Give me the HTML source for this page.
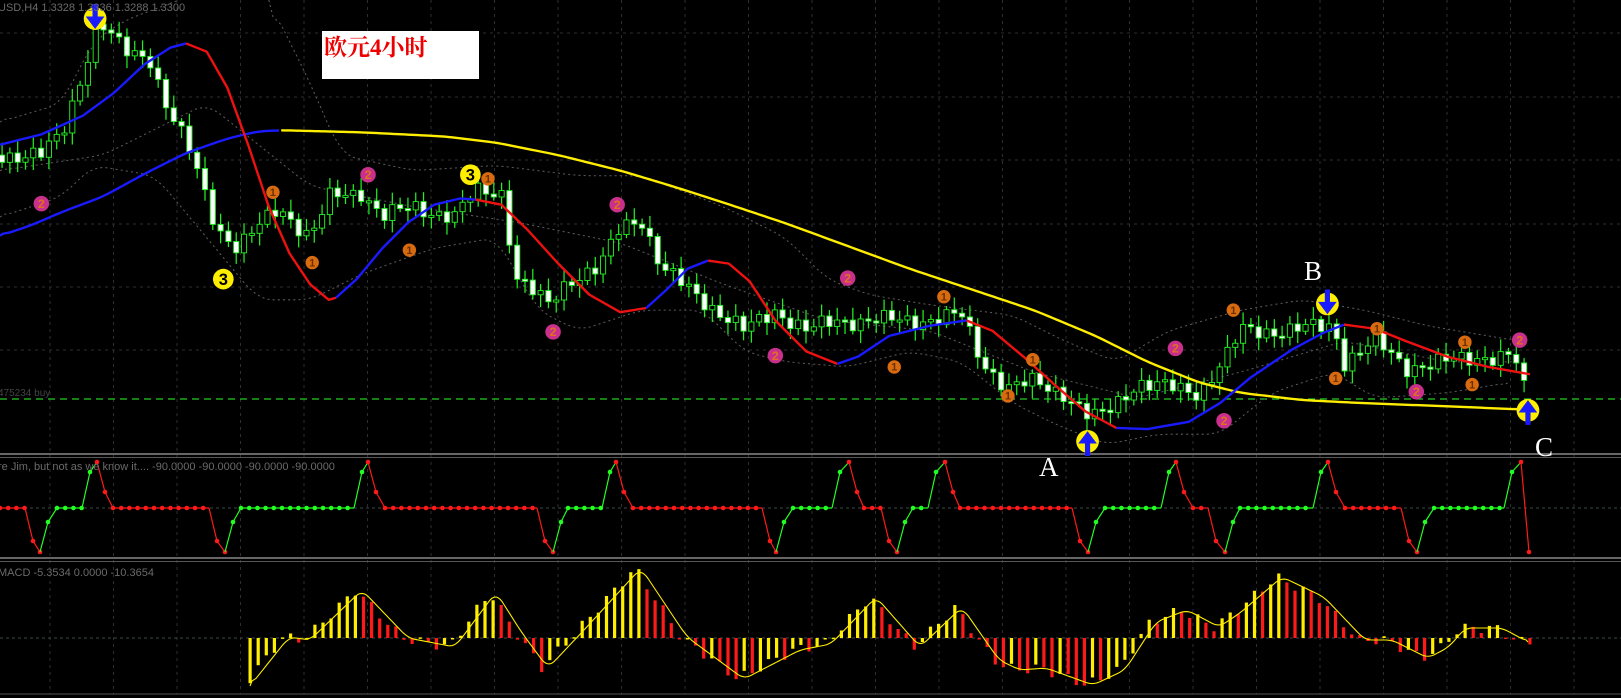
<!DOCTYPE html>
<html><head><meta charset="utf-8">
<style>
html,body{margin:0;padding:0;background:#000;}
body{width:1621px;height:698px;overflow:hidden;position:relative;font-family:"Liberation Sans",sans-serif;}
svg{position:absolute;left:0;top:0;}
.lbl{font-family:"Liberation Sans",sans-serif;font-size:11px;fill:#6a6a6a;}
.big{font-family:"Liberation Serif",serif;font-size:27px;fill:#fff;}
</style></head>
<body>
<svg id="s" width="1621" height="698" viewBox="0 0 1621 698" xmlns="http://www.w3.org/2000/svg">
<rect width="1621" height="698" fill="#000"/>
<g id="grid"></g>
<line x1="0" y1="454" x2="1621" y2="454" stroke="#888" stroke-width="1.5"/>
<line x1="0" y1="457.5" x2="1621" y2="457.5" stroke="#555" stroke-width="1"/>
<line x1="0" y1="558" x2="1621" y2="558" stroke="#888" stroke-width="1.5"/>
<line x1="0" y1="561.5" x2="1621" y2="561.5" stroke="#555" stroke-width="1"/>
<line x1="0" y1="694" x2="1621" y2="694" stroke="#555" stroke-width="1"/>
<line x1="0" y1="399" x2="1621" y2="399" stroke="#22cc22" stroke-width="1.2" stroke-dasharray="7,5"/>
<line x1="0" y1="508" x2="1621" y2="508" stroke="#3a4a4a" stroke-width="1" stroke-dasharray="3,3"/>
<line x1="0" y1="638" x2="1621" y2="638" stroke="#3a4a4a" stroke-width="1" stroke-dasharray="3,3"/>
<g id="main" transform="scale(1.0338)"></g>
<g id="osc"></g>
<g id="macd"></g>
<text class="lbl" x="-2" y="11">USD,H4  1.3328  1.3336  1.3288  1.3300</text>
<text class="lbl" x="-2" y="396" style="font-size:10px;fill:#444">475234 buy</text>
<text class="lbl" x="-2" y="470">re Jim, but not as we know it....  -90.0000 -90.0000 -90.0000 -90.0000</text>
<text class="lbl" x="-2" y="576">MACD -5.3534 0.0000 -10.3654</text>
<rect x="322" y="31" width="157" height="48" fill="#fff"/>
<text x="324" y="55" style="font-family:'Liberation Serif','Noto Serif CJK SC',serif;font-size:23px;font-weight:bold;fill:#ee0000">欧元4小时</text>
<text class="big" x="1039" y="476">A</text>
<text class="big" x="1304" y="280">B</text>
<text class="big" x="1535" y="456">C</text>
</svg>
<script>
(function(){
var NS="http://www.w3.org/2000/svg";
function el(p,t,a){var e=document.createElementNS(NS,t);for(var k in a)e.setAttribute(k,a[k]);p.appendChild(e);return e;}
function pl(p,pts,c,w,d){var a={points:pts.map(function(q){return q[0]+","+q[1]}).join(" "),fill:"none",stroke:c,"stroke-width":w,"stroke-linejoin":"round"};if(d)a["stroke-dasharray"]=d;return el(p,"polyline",a);}
function interp(pts,x){if(x<=pts[0][0])return pts[0][1];for(var i=1;i<pts.length;i++){if(x<=pts[i][0]){var a=pts[i-1],b=pts[i];return a[1]+(b[1]-a[1])*(x-a[0])/(b[0]-a[0]);}}return pts[pts.length-1][1];}
function smooth(pts,step){var o=[];for(var x=pts[0][0];x<=pts[pts.length-1][0];x+=step){o.push([x,interp(pts,x)]);}
 var r=[];for(var i=0;i<o.length;i++){var s=0,n=0;for(var j=-3;j<=3;j++){if(o[i+j]){s+=o[i+j][1];n++;}}r.push([o[i][0],s/n]);}r[0]=o[0];r[r.length-1]=o[o.length-1];return r;}
var G=document.getElementById("grid");
for(var x=50;x<1621;x+=63.5)el(G,"line",{x1:x,y1:0,x2:x,y2:694,stroke:"#2e2e2e",'stroke-dasharray':"3,4"});
[33,97,160,224,287,350].forEach(function(y){el(G,"line",{x1:0,y1:y,x2:1621,y2:y,stroke:"#2e2e2e",'stroke-dasharray':"3,4"});});
var M=document.getElementById("main");
var up=[[0,118],[60,100],[90,40],[120,20],[200,-10]],up2=[[260,0],[300,80],[330,150],[400,165],[480,160],[560,170],[620,170],[700,200],[760,230],[800,270],[840,285],[900,295],[940,300],[980,305],[1030,330],[1080,350],[1130,320],[1200,300],[1260,290],[1320,300],[1380,315],[1440,325],[1470,330]];
var lo=[[0,210],[60,190],[90,160],[150,170],[200,230],[250,290],[300,290],[350,265],[420,240],[480,230],[520,300],[560,320],[620,300],[680,300],[720,340],[760,350],[820,355],[880,340],[930,350],[980,390],[1020,410],[1070,430],[1120,420],[1180,420],[1230,380],[1290,360],[1330,385],[1400,380],[1460,370]];
var mid=[[0,165],[100,150],[200,100],[300,180],[400,200],[500,215],[600,235],[700,275],[800,310],[900,320],[1000,360],[1100,385],[1200,360],[1300,330],[1400,350],[1470,350]];
[up,up2,lo,mid].forEach(function(p){pl(M,smooth(p,4),"#5a5a5a",1,"2,3");});
var cp=[[0,150],[40,150],[60,130],[80,70],[95,20],[120,50],[145,55],[160,100],[185,150],[210,220],[230,240],[250,220],[270,200],[300,230],[320,190],[350,185],[370,210],[400,200],[440,210],[460,185],[485,185],[500,270],[530,295],[550,270],[580,260],[600,220],[620,210],[640,260],[680,290],[720,320],[750,300],[780,320],[810,310],[850,310],[890,310],[930,305],[950,350],[975,375],[1000,370],[1030,380],[1055,405],[1070,400],[1100,370],[1130,375],[1160,380],[1190,340],[1200,320],[1240,320],[1290,315],[1300,350],[1330,330],[1360,355],[1400,350],[1430,345],[1465,345],[1475,380]];
var prev=150,ii=0;
for(var cx=2;cx<=1476;cx+=7.55){ii++;var nz=Math.sin(ii*2.3)*6+Math.sin(ii*0.7)*4;var cl=interp(cp,cx)+nz;var op=prev;prev=cl;
 var bt=Math.min(op,cl),bb=Math.max(op,cl);if(bb-bt<2)bb=bt+2;
 var wt=bt-3-Math.abs(Math.sin(ii*1.7))*9,wb=bb+3+Math.abs(Math.cos(ii*1.3))*9;
 el(M,"line",{x1:cx,y1:wt,x2:cx,y2:wb,stroke:"#22ee22","stroke-width":1.2});
 el(M,"rect",{x:cx-2.5,y:bt,width:5,height:bb-bt,fill:(cl>op?"#fff":"#000"),stroke:"#22ee22","stroke-width":0.9});}
pl(M,smooth([[0,228],[30,218],[60,205],[100,190],[140,168],[180,148],[220,134],[250,127],[272,126]],3),"#1a1aff",2.3);
pl(M,smooth([[272,126],[350,128],[430,132],[480,138],[540,150],[600,165],[650,180],[700,196],[760,216],[820,238],[880,260],[940,280],[1000,300],[1060,325],[1110,350],[1160,370],[1200,380],[1260,387],[1320,390],[1400,393],[1470,396]],3),"#ffee00",2.3);
var segs=[["#1a1aff",[[0,140],[40,130],[80,112],[110,90],[140,62],[165,46],[180,42]]],
["#ee1111",[[180,42],[200,50],[220,85],[240,140],[260,200],[280,245],[300,275],[318,290],[325,288]]],
["#1a1aff",[[325,288],[345,270],[370,240],[395,215],[420,198],[445,192],[460,193]]],
["#ee1111",[[460,193],[485,198],[510,222],[540,255],[570,285],[600,302],[625,298]]],
["#1a1aff",[[625,298],[645,280],[665,260],[685,252]]],
["#ee1111",[[685,252],[705,255],[725,272],[750,310],[780,340],[810,352]]],
["#1a1aff",[[810,352],[830,345],[860,325],[900,315],[935,310]]],
["#ee1111",[[935,310],[960,320],[990,345],[1020,372],[1050,398],[1080,414]]],
["#1a1aff",[[1080,414],[1110,415],[1150,408],[1180,390],[1210,365],[1250,338],[1280,322],[1300,314]]],
["#ee1111",[[1300,314],[1330,318],[1360,330],[1400,345],[1440,355],[1480,362]]]];
segs.forEach(function(s){pl(M,s[1],s[0],2.3);});
function mk(x,y,r,f,t,tc){el(M,"circle",{cx:x,cy:y,r:r,fill:f});var e=el(M,"text",{x:x,y:y+r*0.55,"text-anchor":"middle","font-size":r*1.6,"font-weight":"bold","font-family":"Liberation Sans,sans-serif",fill:tc});e.textContent=t;}
[[40,197],[356,169],[597,198],[535,321],[750,344],[820,269],[1137,337],[1184,407],[1370,379],[1470,329]].forEach(function(p){mk(p[0],p[1],7.5,"#c8308c","2","#e07020");});
[[264,186],[472,173],[302,254],[396,242],[913,287],[999,348],[865,355],[975,383],[1193,300],[1332,318],[1417,331],[1292,366],[1424,372]].forEach(function(p){mk(p[0],p[1],6.5,"#d86a10","1","#6a3000");});
mk(216,270,10,"#ffee00","3","#000");mk(455,169,10,"#ffee00","3","#000");
function arr(x,y,dn){el(M,"circle",{cx:x,cy:y,r:11,fill:"#ffee00"});
 if(dn){el(M,"polygon",{points:(x-9)+","+(y-2)+" "+(x+9)+","+(y-2)+" "+x+","+(y+10),fill:"#1a1aff"});el(M,"rect",{x:x-2.5,y:y-14,width:5,height:13,fill:"#1a1aff"});}
 else{el(M,"polygon",{points:(x-9)+","+(y+2)+" "+(x+9)+","+(y+2)+" "+x+","+(y-10),fill:"#1a1aff"});el(M,"rect",{x:x-2.5,y:y+1,width:5,height:13,fill:"#1a1aff"});}}
arr(92,18,true);arr(1284,294,true);arr(1052,427,false);arr(1478,397,false);
var O=document.getElementById("osc");
var F=508,L=552,T=462;
var ev=[["r",0,25],["low",40],["g",57,82],["top",97],["r",113,209],["low",225],["g",241,354],["top",368],["r",385,537],["low",553],["g",568,602],["top",616],["r",633,762],["low",776],["g",793,832],["top",849],["r",864,881],["low",897],["g",913,928],["top",945],["r",960,1072],["low",1088],["g",1105,1161],["top",1176],["r",1193,1208],["low",1225],["g",1240,1313],["top",1328],["r",1345,1401],["low",1417],["g",1434,1504],["top",1521]];
function dot(x,y,c){el(O,"circle",{cx:x,cy:y,r:2.3,fill:c});}
for(var k=0;k<ev.length;k++){var e=ev[k],nx=ev[k+1];
 if(e[0]=="r"||e[0]=="g"){var c=e[0]=="r"?"#ff1a1a":"#22ff22";el(O,"line",{x1:e[1],y1:F,x2:e[2],y2:F,stroke:c,"stroke-width":1.2});for(var x=e[1];x<=e[2]+0.5;x+=8.2)dot(x,F,c);
  if(nx){if(nx[0]=="low"){pl(O,[[e[2],F],[e[2]+8,541],[nx[1],L]],"#ff1a1a",1.2);dot(e[2]+8,541,"#ff1a1a");dot(nx[1],L,"#ff1a1a");}
   else{pl(O,[[e[2],F],[e[2]+8,472],[nx[1],T]],"#22ff22",1.2);dot(e[2]+8,472,"#22ff22");dot(nx[1],T,"#ff1a1a");}}}
 if(e[0]=="low"&&nx){pl(O,[[e[1],L],[e[1]+8,522],[nx[1],F]],"#22ff22",1.2);dot(e[1]+8,522,"#22ff22");}
 if(e[0]=="top"&&nx){pl(O,[[e[1],T],[e[1]+8,492],[nx[1],F]],"#ff1a1a",1.2);dot(e[1]+8,492,"#ff1a1a");}}
pl(O,[[1521,T],[1529,552]],"#ff1a1a",1.2);dot(1529,552,"#ff1a1a");
var A=document.getElementById("macd");
var sig=[[250,686],[289,637],[310,640],[362,590],[408,638],[455,647],[496,592],[522,633],[548,668],[584,630],[641,568],[687,637],[744,679],[800,650],[831,644],[876,597],[920,647],[962,607],[999,660],[1020,670],[1046,668],[1093,685],[1125,670],[1156,622],[1187,610],[1219,627],[1240,613],[1282,577],[1324,597],[1365,640],[1392,640],[1428,658],[1449,647],[1465,628],[1502,628],[1528,642]];
var pv=null,j=0;
for(var x=250;x<=1530;x+=8.1){j++;var v=interp(sig,x+6)+Math.sin(j*1.9)*5;var h=v-638;var col=(pv!==null&&v>pv)?"#ff1a1a":"#ffee00";pv=v;
 el(A,"rect",{x:x-1.5,y:Math.min(638,v),width:3.2,height:Math.max(1.5,Math.abs(h)),fill:col});}
pl(A,smooth(sig,2),"#ffee00",1.1);
})();
</script>
</body></html>
